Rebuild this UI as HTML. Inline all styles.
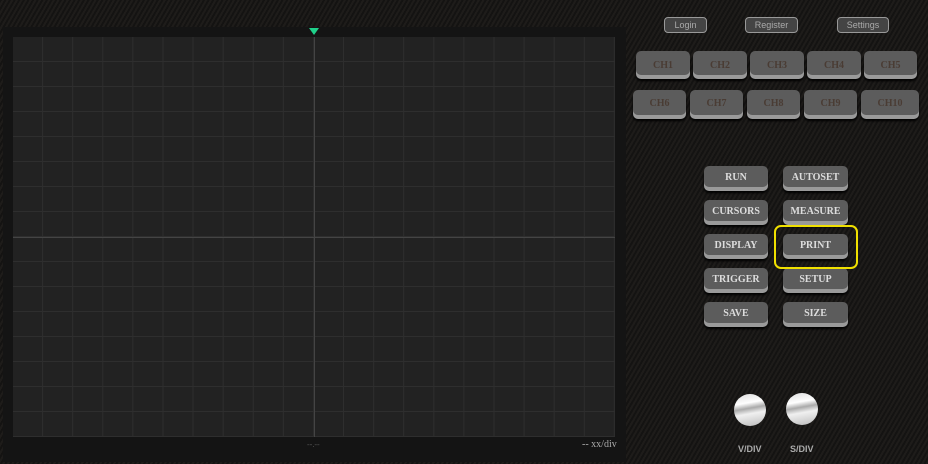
<!DOCTYPE html><html><head><style>
body{margin:0;width:928px;height:464px;overflow:hidden;background:#1a1816;background-image:repeating-linear-gradient(-60deg,#1e1c1a 0 2px,#141312 2px 4px);font-family:"Liberation Serif",serif;position:relative}
.a{position:absolute}
.top{position:absolute;height:14px;top:17px;border:1px solid #999;border-radius:4px;background:#444;color:#aaa;font:9px "Liberation Sans",sans-serif;text-align:center;line-height:14px}
.b{position:absolute;background:#5c5c5c;border-radius:5px;box-shadow:0 4px 0 #9a9a9a,0 6px 2px #000;text-align:center;font-weight:bold;font-size:10px}
.ch{color:#4a3c34;height:24px;line-height:29px}
.c{color:#ddd;height:21px;line-height:23px;width:64px}
.k{position:absolute;width:32px;height:32px;border-radius:50%;background:linear-gradient(170deg,#ddd 0,#fff 30%,#aaa 45%,#f0f0f0 60%,#bbb 100%)}
.l{position:absolute;color:#aaa;font:bold 9px "Liberation Sans",sans-serif}
</style></head><body>
<div class="a" style="left:3px;top:27px;width:623px;height:435px;background:#141414"></div>
<div class="a" style="left:13px;top:37px;width:602px;height:400px;background-color:#222;background-image:linear-gradient(90deg,#2e2e2e 1px,transparent 1px),linear-gradient(#2e2e2e 1px,transparent 1px);background-size:30.1px 25px;background-position:-1px -1px"></div>
<div class="a" style="left:314px;top:37px;width:1px;height:400px;background:#444"></div>
<div class="a" style="left:13px;top:237px;width:602px;height:1px;background:#444"></div>
<div class="a" style="left:309px;top:28px;width:0;height:0;border-left:5px solid transparent;border-right:5px solid transparent;border-top:7px solid #1fd08a"></div>
<div class="a" style="left:307px;top:440px;color:#555;font-size:8px">--.--</div>
<div class="a" style="left:582px;top:439px;color:#aaa;font-size:10px">-- xx/div</div>
<div class="top" style="left:664px;width:41px">Login</div>
<div class="top" style="left:745px;width:51px">Register</div>
<div class="top" style="left:837px;width:50px">Settings</div>
<div class="b ch" style="left:636px;top:51px;width:54px">CH1</div>
<div class="b ch" style="left:693px;top:51px;width:54px">CH2</div>
<div class="b ch" style="left:750px;top:51px;width:54px">CH3</div>
<div class="b ch" style="left:807px;top:51px;width:54px">CH4</div>
<div class="b ch" style="left:864px;top:51px;width:53px">CH5</div>
<div class="b ch" style="left:633px;top:90px;width:53px;height:25px;line-height:28px">CH6</div>
<div class="b ch" style="left:690px;top:90px;width:53px;height:25px;line-height:28px">CH7</div>
<div class="b ch" style="left:747px;top:90px;width:53px;height:25px;line-height:28px">CH8</div>
<div class="b ch" style="left:804px;top:90px;width:53px;height:25px;line-height:28px">CH9</div>
<div class="b ch" style="left:861px;top:90px;width:58px;height:25px;line-height:28px">CH10</div>
<div class="b c" style="left:704px;top:166px">RUN</div>
<div class="b c" style="left:783px;top:166px;width:65px">AUTOSET</div>
<div class="b c" style="left:704px;top:200px">CURSORS</div>
<div class="b c" style="left:783px;top:200px;width:65px">MEASURE</div>
<div class="b c" style="left:704px;top:234px">DISPLAY</div>
<div class="b c" style="left:783px;top:234px;width:65px">PRINT</div>
<div class="b c" style="left:704px;top:268px">TRIGGER</div>
<div class="b c" style="left:783px;top:268px;width:65px">SETUP</div>
<div class="b c" style="left:704px;top:302px">SAVE</div>
<div class="b c" style="left:783px;top:302px;width:65px">SIZE</div>
<div class="a" style="left:774px;top:225px;width:80px;height:40px;border:2px solid #f0e000;border-radius:7px"></div>
<div class="k" style="left:734px;top:394px"></div>
<div class="k" style="left:786px;top:393px"></div>
<div class="l" style="left:738px;top:444px">V/DIV</div>
<div class="l" style="left:790px;top:444px">S/DIV</div>
</body></html>
